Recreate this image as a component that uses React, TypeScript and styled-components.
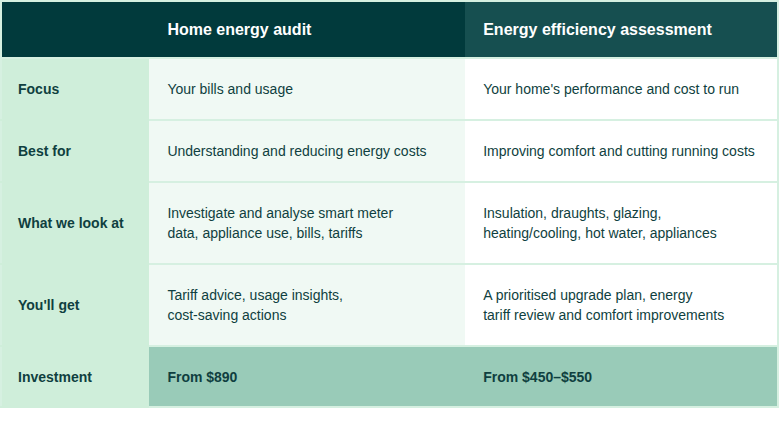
import React from "react";
import styled, { createGlobalStyle } from "styled-components";

const Global = createGlobalStyle`
  html, body { margin: 0; padding: 0; background: #ffffff; }
  body { font-family: "Liberation Sans", Arial, sans-serif; }
`;

const Table = styled.table`
  width: 779px;
  border-collapse: collapse;
  border: 2px solid #d6f0e1;
  color: #0f3f40;
  font-size: 14px;
  table-layout: fixed;
`;

const HeadCell = styled.th<{ $alt?: boolean }>`
  height: 55px;
  padding: 0 18px;
  text-align: left;
  font-size: 16px;
  font-weight: 700;
  color: #ffffff;
  background: ${(p) => (p.$alt ? "#164f50" : "#013a3c")};
  border-bottom: 2px solid #d6f0e1;
`;

const Row = styled.tr<{ $h: number }>`
  height: ${(p) => p.$h}px;
`;

const Label = styled.th`
  padding: 0 16px;
  text-align: left;
  font-weight: 700;
  font-size: 14px;
  background: #cfeeda;
  border-bottom: 2px solid #cfeeda;
`;

const Cell = styled.td<{ $tone: "mint" | "white" | "price" }>`
  padding: 0 18px;
  line-height: 20px;
  vertical-align: middle;
  background: ${(p) =>
    p.$tone === "mint" ? "#f0f9f4" : p.$tone === "white" ? "#ffffff" : "#99cbb8"};
  font-weight: ${(p) => (p.$tone === "price" ? 700 : 400)};
  border-bottom: 2px solid #d6f0e1;
`;

const rows = [
  { label: "Focus", h: 62, a: ["Your bills and usage"], b: ["Your home's performance and cost to run"] },
  { label: "Best for", h: 62, a: ["Understanding and reducing energy costs"], b: ["Improving comfort and cutting running costs"] },
  {
    label: "What we look at",
    h: 82,
    a: ["Investigate and analyse smart meter", "data, appliance use, bills, tariffs"],
    b: ["Insulation, draughts, glazing,", "heating/cooling, hot water, appliances"],
  },
  {
    label: "You'll get",
    h: 82,
    a: ["Tariff advice, usage insights,", "cost-saving actions"],
    b: ["A prioritised upgrade plan, energy", "tariff review and comfort improvements"],
  },
];

const Lines = ({ lines }: { lines: string[] }) => (
  <>
    {lines.map((l, i) => (
      <React.Fragment key={i}>
        {i > 0 && <br />}
        {l}
      </React.Fragment>
    ))}
  </>
);

export default function App() {
  return (
    <>
      <Global />
      <Table>
        <colgroup>
          <col style={{ width: 148 }} />
          <col style={{ width: 315 }} />
          <col style={{ width: 312 }} />
        </colgroup>
        <thead>
          <tr>
            <HeadCell />
            <HeadCell>Home energy audit</HeadCell>
            <HeadCell $alt>Energy efficiency assessment</HeadCell>
          </tr>
        </thead>
        <tbody>
          {rows.map((r) => (
            <Row key={r.label} $h={r.h}>
              <Label>{r.label}</Label>
              <Cell $tone="mint">
                <Lines lines={r.a} />
              </Cell>
              <Cell $tone="white">
                <Lines lines={r.b} />
              </Cell>
            </Row>
          ))}
          <Row $h={61}>
            <Label>Investment</Label>
            <Cell $tone="price">From $890</Cell>
            <Cell $tone="price">From $450–$550</Cell>
          </Row>
        </tbody>
      </Table>
    </>
  );
}
